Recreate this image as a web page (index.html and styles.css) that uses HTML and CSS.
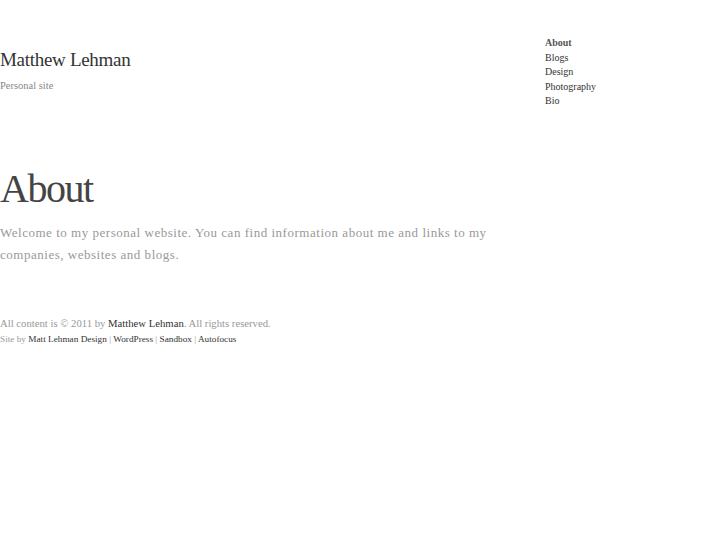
FILE: index.html
```html
<!DOCTYPE html>
<html>
<head>
<meta charset="utf-8">
<title>Matthew Lehman</title>
<link rel="stylesheet" href="styles.css">
</head>
<body>
<div class="wrap">
  <div class="main">
    <header class="header">
      <h1 class="site-title">Matthew Lehman</h1>
      <div class="site-desc">Personal site</div>
    </header>
    <article class="post">
      <h2 class="post-title">About</h2>
      <p class="post-body">Welcome to my personal website. You can find information about me and links to my companies, websites and blogs.</p>
    </article>
    <footer class="footer">
      <p class="copy">All content is © 2011 by <a href="#">Matthew Lehman</a>. All rights reserved.</p>
      <p class="credits">Site by <a href="#">Matt Lehman Design</a> | <a href="#">WordPress</a> | <a href="#">Sandbox</a> | <a href="#">Autofocus</a></p>
    </footer>
  </div>
  <nav class="nav">
    <ul>
      <li class="current"><a href="#">About</a></li>
      <li><a href="#">Blogs</a></li>
      <li><a href="#">Design</a></li>
      <li><a href="#">Photography</a></li>
      <li><a href="#">Bio</a></li>
    </ul>
  </nav>
</div>
</body>
</html>
```
FILE: styles.css
```css
html, body {
  margin: 0;
  padding: 0;
  background: #fff;
}
body {
  font-family: "Liberation Serif", "Times New Roman", serif;
  color: #999;
}
a {
  color: #333;
  text-decoration: none;
}
.wrap {
  display: flex;
  align-items: flex-start;
}
.main {
  width: 545px;
  flex: none;
}
.header {
  padding-top: 48px;
}
.site-title {
  margin: 0;
  font-size: 19px;
  font-weight: normal;
  letter-spacing: -0.3px;
  line-height: 24px;
  color: #333;
}
.site-desc {
  margin-top: 6px;
  font-size: 10.5px;
  line-height: 15px;
  color: #888;
}
.post {
  padding-top: 72px;
}
.post-title {
  margin: 0;
  font-size: 40px;
  font-weight: normal;
  letter-spacing: -1.5px;
  line-height: 48px;
  color: #444;
}
.post-body {
  margin: 9px 0 0;
  width: 520px;
  font-size: 13px;
  line-height: 22px;
  letter-spacing: 0.52px;
  color: #999;
}
.footer {
  padding-top: 49px;
}
.copy {
  margin: 0;
  font-size: 10.7px;
  line-height: 16px;
}
.credits {
  margin: 0;
  font-size: 9.25px;
  line-height: 16px;
}
.nav {
  padding-top: 36px;
}
.nav ul {
  list-style: none;
  margin: 0;
  padding: 0;
}
.nav li {
  font-size: 10px;
  line-height: 14.5px;
}
.nav li.current a {
  font-weight: bold;
  color: #555;
}
```
